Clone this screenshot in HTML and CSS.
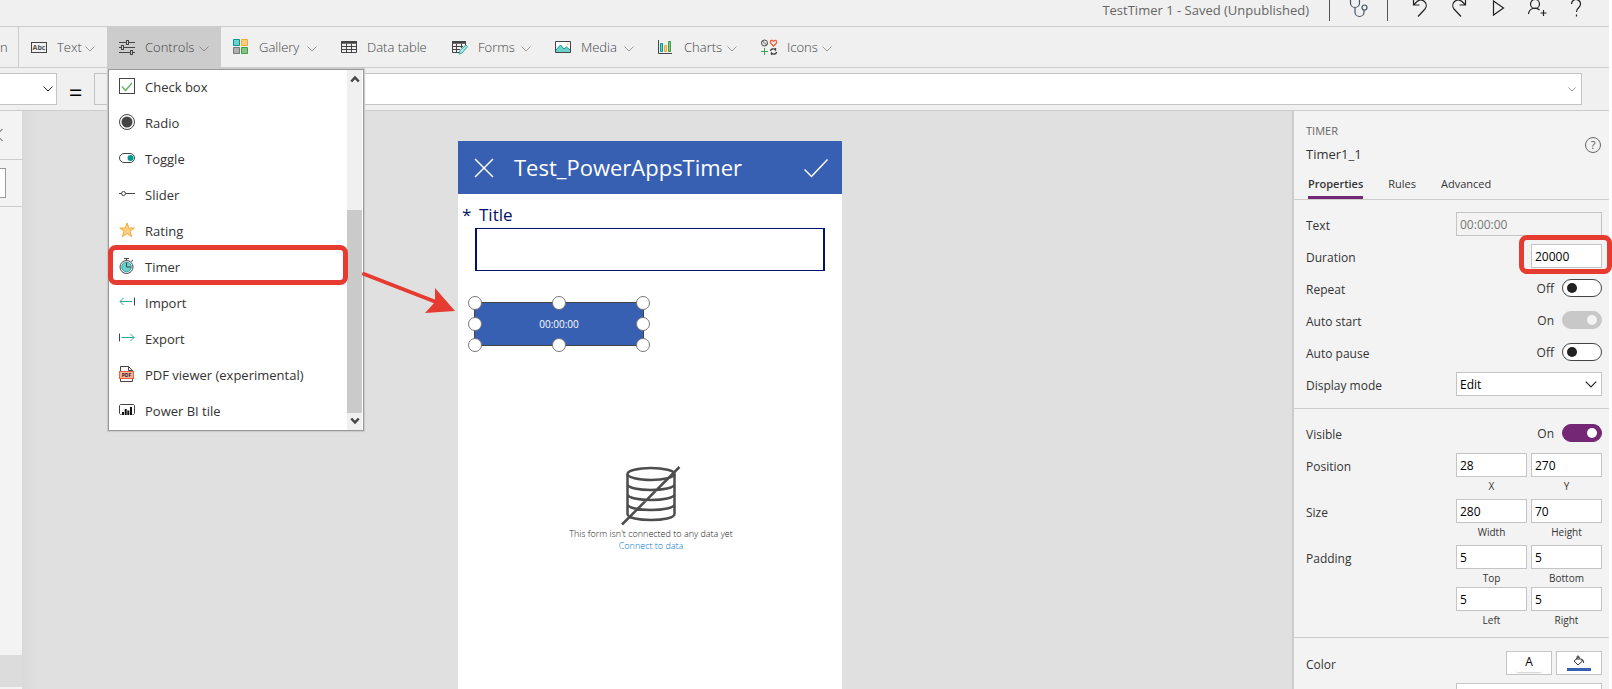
FILE: index.html
```html
<!DOCTYPE html>
<html lang="en">
<head>
<meta charset="utf-8">
<title>TestTimer 1 - Saved (Unpublished)</title>
<link rel="stylesheet" href="styles.css">
</head>
<body>
<svg class="defs" aria-hidden="true">
  <symbol id="chev" viewBox="0 0 10 6"><path d="M.5 .5 5 5 9.500 .5"/></symbol>
</svg>
<div class="app">
  <header class="titlebar">
    <span class="doc-name">TestTimer 1 - Saved (Unpublished)</span>
    <span class="bar"></span>
    <button class="tool check" aria-label="App checker"><svg width="20" height="20" viewBox="0 0 20 20"><path d="M3.500 1h-2v4a4.500 4.500 0 0 0 9 0V1h-2M6 9.500V14a4.500 4.500 0 0 0 9 0v-2"/><circle cx="15.500" cy="9.500" r="2.500"/></svg></button>
    <span class="bar"></span>
    <button class="tool" aria-label="Undo"><svg width="18" height="20" viewBox="0 0 18 20"><path d="M2.500 1v6h6M2.500 7 6 3.500a5.500 5.500 0 0 1 8 7.500L7 18.500"/></svg></button>
    <button class="tool" aria-label="Redo"><svg width="18" height="20" viewBox="0 0 18 20"><path d="M15.500 1v6h-6M15.500 7 12 3.500a5.500 5.500 0 0 0-8 7.500l7 7.500"/></svg></button>
    <button class="tool" aria-label="Preview"><svg width="18" height="20" viewBox="0 0 18 20"><path d="M4.500 3v14l10-7z"/></svg></button>
    <button class="tool" aria-label="Share"><svg width="20" height="20" viewBox="0 0 20 20"><circle cx="8" cy="6" r="4.500"/><path d="M1.500 16a6.500 6.500 0 0 1 11-4M16.500 12v6M13.500 15h6"/></svg></button>
    <button class="tool" aria-label="Help"><svg width="18" height="20" viewBox="0 0 18 20"><path d="M4.500 6a4.500 4.500 0 1 1 7.500 3.300C10 11 9.500 11.500 9.500 14M9.500 16.500v2"/></svg></button>
  </header>

  <nav class="ribbon">
    <button class="item cut">n</button>
    <button class="item"><svg class="ic" viewBox="0 0 16 16"><rect x=".5" y="3.500" width="15" height="10"/><text x="8" y="11" class="abc">Abc</text></svg><span>Text</span><svg class="chev"><use href="#chev"/></svg></button>
    <div class="menu-host">
      <button class="item open"><svg class="ic" viewBox="0 0 16 16"><path d="M0 3.500h7M10 3.500h6M0 8.500h2M5 8.500h11M0 13.500h11M14 13.500h2"/><rect x="7.500" y="1.500" width="2" height="4"/><rect x="2.500" y="6.500" width="2" height="4"/><rect x="11.500" y="11.500" width="2" height="4"/></svg><span>Controls</span><svg class="chev"><use href="#chev"/></svg></button>
      <div class="menu">
        <div class="menu-list">
          <button><svg class="ic" viewBox="0 0 16 16"><rect x=".5" y=".5" width="15" height="15"/><path d="m3 8.500 3.500 4L13 5" stroke="#6cb56c" stroke-width="1.500"/></svg>Check box</button>
          <button><svg class="ic" viewBox="0 0 16 16"><circle cx="8" cy="8" r="7.500"/><circle cx="8" cy="8" r="5.500" fill="#444" stroke="none"/></svg>Radio</button>
          <button><svg class="ic" viewBox="0 0 16 16"><rect x=".5" y="3.500" width="15" height="9" rx="4.500"/><circle cx="11.500" cy="8" r="3" fill="#009a93" stroke="none"/></svg>Toggle</button>
          <button><svg class="ic" viewBox="0 0 16 16"><path d="M0 7.500h2.500M6.500 7.500H16"/><circle cx="4.500" cy="7.500" r="2"/></svg>Slider</button>
          <button><svg class="ic" viewBox="0 0 16 16"><path d="m8 1 1.900 5h5.400l-4.200 3.300 1.500 5.400L8 11.500l-4.600 3.200 1.500-5.400L.7 6h5.400z" fill="#fdce82" stroke="#f2a93b"/></svg>Rating</button>
          <button><svg class="ic" viewBox="0 0 16 16"><circle cx="7.500" cy="9" r="6.500"/><circle cx="7.500" cy="9" r="4.800" fill="#6cd0cc" stroke="#2aa6a0"/><path d="M7.500 4.500V9H12M7.500 2.500V.5M5 .5h5M12 3.500l2-1.500"/></svg>Timer</button>
          <button><svg class="ic" viewBox="0 0 16 16"><path d="M13 7.500H1M4.500 4 1 7.500 4.500 11" stroke="#2aa6a0"/><path d="M15.500 3.500v8"/></svg>Import</button>
          <button><svg class="ic" viewBox="0 0 16 16"><path d="M2.500 7.500H15M11.500 4 15 7.500 11.500 11" stroke="#2aa6a0"/><path d="M.5 3.500v8"/></svg>Export</button>
          <button><svg class="ic" viewBox="0 0 16 16"><path d="M1.500 5V.5h8l4 4v11h-12V12M9.500 .5v4h4"/><rect x=".5" y="5.500" width="14" height="7" fill="#ffb09a" stroke="#e8603c"/><text x="7.500" y="11.300" class="pdf">PDF</text></svg>PDF viewer (experimental)</button>
          <button><svg class="ic" viewBox="0 0 16 16"><path d="M2.500 12.500h-1l-1-1v-8l1-1h13l1 1v8l-1 1h-1"/><path d="M4 13v-3M6.700 13V7M9.300 13V8.500M12 13V5" stroke="#111" stroke-width="2"/></svg>Power BI tile</button>
        </div>
        <div class="scroll"><svg viewBox="0 0 8 8"><path d="M1 6 4 2.800 7 6"/></svg><i></i><svg viewBox="0 0 8 8"><path d="M1 2 4 5.200 7 2"/></svg></div>
        <div class="mark mark-timer"></div>
        <svg class="arrow" width="96" height="46" viewBox="0 0 96 46"><path d="M2 5 74 33" stroke="#e63b30" stroke-width="4" stroke-linecap="round"/><path d="M73 19 93 42 63 44 73 33z" fill="#e63b30" stroke="none"/></svg>
      </div>
    </div>
    <button class="item"><svg class="ic" viewBox="0 0 16 16"><path d="M.5 .5h6v6h-6z" fill="#6cd0cc" stroke="#009a93"/><path d="M8.500 .5h6v6h-6z" fill="#fdce82" stroke="#f2a93b"/><path d="M.5 8.500h6v6h-6z" fill="#b0b0b0" stroke="#777"/><path d="M8.500 8.500h6v6h-6z" fill="#85c285" stroke="#3fa046"/></svg><span>Gallery</span><svg class="chev"><use href="#chev"/></svg></button>
    <button class="item"><svg class="ic" viewBox="0 0 16 16"><path d="M.5 2.500h15v11H.5zM5.500 5v9M10.500 5v9M1 7.500h14M1 10.500h14"/><path d="M0 3.500h16" stroke-width="2.500"/></svg><span>Data table</span></button>
    <button class="item"><svg class="ic" viewBox="0 0 16 16"><path d="M7 13.500H.5v-11h13V6M4.500 5v8M9.500 5v4M1 7.500h10M1 10.500h7"/><path d="M0 3.500h14" stroke-width="2.500"/><path d="m7 15 1-3.500L14 6l1.500 1.800L10 14z" fill="#b5e6e4" stroke="#2aa6a0"/></svg><span>Forms</span><svg class="chev"><use href="#chev"/></svg></button>
    <button class="item"><svg class="ic" viewBox="0 0 16 16"><path d="M.5 2.500h15v11H.5z" fill="#fff"/><path d="M1 11 5.500 6 9 10l2.500-2L15 11.500V13H1z" fill="#6cd0cc" stroke="none"/><path d="m1 11 4.500-5L9 10l2.500-2L15 11" stroke="#009a93"/><path d="M12 5h1.500" stroke="#f2a93b"/></svg><span>Media</span><svg class="chev"><use href="#chev"/></svg></button>
    <button class="item"><svg class="ic" viewBox="0 0 16 16"><path d="M.5 1v13.500H14"/><path d="M2.500 4.500h2v8h-2z" fill="#6cd0cc" stroke="#009a93"/><path d="M6.500 6.500h2v6h-2z" fill="#fdce82" stroke="#f2a93b"/><path d="M10.500 2.500h2v10h-2z" fill="#85c285" stroke="#3fa046"/></svg><span>Charts</span><svg class="chev"><use href="#chev"/></svg></button>
    <button class="item"><svg class="ic" viewBox="0 0 16 16"><circle cx="3.500" cy="4" r="3"/><path d="m1.500 2 4 4"/><path d="M12.500 7 9.500 4V2l1.500-.8L12.500 2.500 14 1.200l1.500.8v2z" stroke="#f0603c" stroke-width="1.300"/><path d="M3.500 9v7M0 12.500h7" stroke="#3fa046"/><path d="M9.500 12c0-2 3-3 5-1V9M15.500 13c0 2-3 3-5 1v2" stroke-width="1.300"/></svg><span>Icons</span><svg class="chev"><use href="#chev"/></svg></button>
  </nav>

  <div class="formula">
    <button class="prop" aria-label="Property"><svg class="chev dark"><use href="#chev"/></svg></button>
    <span class="eq">=</span>
    <div class="fbox"><span class="fx"></span><input aria-label="Formula"><svg class="chev small"><use href="#chev"/></svg></div>
  </div>

  <main class="work">
    <aside class="tree">
      <div class="tree-head"><svg width="8" height="14" viewBox="0 0 8 14"><path d="M7.500 1 1.500 7l6 6"/></svg></div>
      <div class="tree-search"><input aria-label="Search"></div>
      <div class="tree-sel"></div>
    </aside>

    <section class="canvas">
      <div class="phone">
        <div class="phone-head">
          <button aria-label="Cancel"><svg width="20" height="20" viewBox="0 0 20 20"><path d="m1 1 18 18M19 1 1 19"/></svg></button>
          <h1>Test_PowerAppsTimer</h1>
          <button aria-label="Submit"><svg width="24" height="20" viewBox="0 0 24 20"><path d="m.5 11.500 7 7L23.500 1.500"/></svg></button>
        </div>
        <div class="field">
          <label for="title"><span class="star">*</span>Title</label>
          <input id="title">
        </div>
        <div class="timer">00:00:00<i class="h tl"></i><i class="h tc"></i><i class="h tr"></i><i class="h ml"></i><i class="h mr"></i><i class="h bl"></i><i class="h bc"></i><i class="h br"></i></div>
        <div class="empty">
          <svg width="60" height="60" viewBox="0 0 60 60"><ellipse cx="30" cy="8" rx="23.500" ry="6"/><path d="M6.500 8v40c0 8 47 8 47 0V8M6.500 18c0 8 47 8 47 0M6.500 28c0 8 47 8 47 0M6.500 38c0 8 47 8 47 0M1 58.500 58.500 1"/></svg>
          <span>This form isn't connected to any data yet</span>
          <a href="#">Connect to data</a>
        </div>
      </div>
    </section>

    <aside class="panel">
      <div class="panel-head">
        <div><div class="kind">TIMER</div><div class="name">Timer1_1</div></div>
        <button class="help" aria-label="Help">?</button>
      </div>
      <div class="tabs"><button class="active">Properties</button><button>Rules</button><button>Advanced</button></div>
      <div class="group">
        <div class="row"><label for="text">Text</label><input id="text" class="box wide" value="00:00:00" disabled></div>
        <div class="row"><label for="dur">Duration</label><span class="marked"><input id="dur" class="box" value="20000"><span class="mark mark-dur"></span></span></div>
        <div class="row"><label for="rep">Repeat</label><span class="state">Off</span><input id="rep" type="checkbox" class="tog"></div>
        <div class="row"><label for="as">Auto start</label><span class="state">On</span><input id="as" type="checkbox" class="tog" checked disabled></div>
        <div class="row"><label for="ap">Auto pause</label><span class="state">Off</span><input id="ap" type="checkbox" class="tog"></div>
        <div class="row"><label for="dm">Display mode</label><span class="sel"><select id="dm" class="box wide"><option>Edit</option></select><svg class="chev dark"><use href="#chev"/></svg></span></div>
      </div>
      <div class="group second">
        <div class="row"><label for="vis">Visible</label><span class="state">On</span><input id="vis" type="checkbox" class="tog" checked></div>
        <div class="row pair"><span class="lab">Position</span><label><input class="box" value="28">X</label><label><input class="box" value="270">Y</label></div>
        <div class="row pair"><span class="lab">Size</span><label><input class="box" value="280">Width</label><label><input class="box" value="70">Height</label></div>
        <div class="row pair tight"><span class="lab">Padding</span><label><input class="box" value="5">Top</label><label><input class="box" value="5">Bottom</label></div>
        <div class="row pair"><span class="lab"></span><label><input class="box" value="5">Left</label><label><input class="box" value="5">Right</label></div>
      </div>
      <div class="group third">
        <div class="row"><span class="lab">Color</span><button class="swatch">A<i></i></button><button class="swatch fill" aria-label="Fill"><svg width="12" height="11" viewBox="0 0 12 11"><path d="M5.500 2 9.500 6 5 10 1 6zM4 5V1.500Q5 .2 6 1.500V5M8 4q2.500 0 2.800 4"/></svg><i></i></button></div>
        <div class="row"><span class="lab"></span><button class="box wide" aria-label="Border"></button></div>
      </div>
    </aside>
  </main>
</div>
</body>
</html>
```
FILE: styles.css
```css
* { box-sizing: border-box; }
body { margin: 0; background: #fff; font-family: "Open Sans", "Noto Sans", sans-serif; font-size: 13px; color: #333; }
button, input, select { font: inherit; color: inherit; margin: 0; border: 0; border-radius: 0; padding: 0; background: none; }
svg { fill: none; stroke: #444; flex: none; display: block; }
.defs { position: absolute; width: 0; height: 0; }
.app { height: 100vh; margin-right: 3px; display: flex; flex-direction: column; overflow-x: visible; overflow-y: clip; background: #f0f0f0; }
.chev { width: 10px; height: 6px; stroke: #999; }
.chev.dark { stroke: #222; }

.titlebar { height: 27px; flex: none; display: flex; justify-content: flex-end; align-items: flex-start; border-bottom: 1px solid #ccc; padding-right: 23px; }
.doc-name { line-height: 20px; margin-right: 20px; color: #666; }
.bar { width: 1px; height: 21px; background: #555; }
.tool { width: 20px; height: 20px; margin-right: 19px; margin-top: -2px; }
.tool svg { margin: auto; stroke: #222; stroke-width: 1.200; }
.tool.check { margin: -2px 18px 0 19px; }
.tool.check svg { stroke: #41546b; }
.bar + .tool:not(.check) { margin-left: 22px; }
.tool:last-child { margin-right: 0; }

.ribbon { height: 41px; flex: none; display: grid; grid-template-columns: 19px 88px 114px 108px 111px 103px 103px 103px 95px; border-bottom: 1px solid #ccc; color: #444; font-weight: 300; }
.item { display: flex; align-items: center; padding: 0 12px; white-space: nowrap; height: 40px; width: 100%; }
.item .ic { margin-right: 10px; }
.item .chev { margin: 4px 0 0 auto; }
.item.cut { padding: 0; border-right: 1px solid #ccc; }
.item.open { background: #ccc; }
.item.open .chev { stroke: #888; }
.ic { width: 16px; height: 16px; }
.abc { font: 700 7px "Open Sans", sans-serif; text-anchor: middle; fill: #555; stroke: none; }
.pdf { font: 700 5px "Open Sans", sans-serif; text-anchor: middle; fill: #222; stroke: none; }

.menu-host { position: relative; }
.menu { position: absolute; z-index: 5; left: 1px; top: 42px; width: 256px; display: flex; background: #fff; border: 1px solid #999; box-shadow: 0 0 1px 1px #ccc; color: #333; font-weight: 400; }
.menu-list { flex: 1; display: flex; flex-direction: column; }
.menu-list button { height: 36px; display: flex; align-items: center; gap: 10px; padding: 0 10px 2px; text-align: left; white-space: nowrap; }
.menu-list .ic { margin-bottom: 3px; }
.scroll { width: 15px; margin-right: 1px; background: #f0f0f0; display: flex; flex-direction: column; align-items: center; padding: 4px 0; }
.scroll svg { width: 10px; height: 10px; stroke: #444; stroke-width: 2; }
.scroll i { width: 100%; height: 203px; margin: auto 0 3px; background: #cacaca; }
.mark { position: absolute; border: 5px solid #e63b30; border-radius: 8px; }
.mark-timer { left: -1px; top: 175px; width: 240px; height: 40px; }
.arrow { position: absolute; left: 253px; top: 199px; }

.formula { height: 43px; flex: none; display: flex; align-items: center; padding-right: 27px; border-bottom: 1px solid #ccc; }
.prop { width: 57px; height: 32px; background: #fff; border: 1px solid #c4c4c4; border-left: 0; display: flex; justify-content: flex-end; align-items: center; padding-right: 3px; }
.eq { width: 37px; padding-top: 5px; text-align: center; font-size: 24px; line-height: 32px; color: #000; }
.fbox { flex: 1; height: 32px; display: flex; align-items: center; border: 1px solid #c4c4c4; background: #fff; padding-right: 5px; }
.fx { width: 25px; align-self: stretch; background: #f0f0f0; }
.fbox input { flex: 1; align-self: stretch; }
.chev.small { width: 8px; height: 5px; stroke: #777; }

.work { flex: 1; min-height: 0; display: grid; grid-template-columns: 22px 1fr 317px; grid-template-rows: minmax(0, 1fr); }
.tree { background: #f3f3f3; display: flex; flex-direction: column; overflow: hidden; }
.tree-head { height: 49px; flex: none; border-bottom: 1px solid #ccc; display: flex; align-items: center; }
.tree-head svg { margin-left: -5px; }
.tree-search { height: 47px; flex: none; border-bottom: 1px solid #ccc; padding-top: 8px; }
.tree-search input { width: 6px; height: 30px; display: block; background: #fff; border: 1px solid #999; border-left: 0; }
.tree-sel { height: 32px; margin: auto 0 2px; background: #dcdcdc; }
.canvas { background: linear-gradient(90deg, #d9d9d9, #e0e0e0 16px); display: flex; justify-content: center; padding: 30px 14px 0 0; min-height: 0; }
.phone { width: 384px; background: #fff; }
.phone-head { height: 53px; background: #3860b2; color: #fff; display: flex; align-items: center; padding: 0 14px 0 16px; }
.phone-head svg { stroke: #fff; stroke-width: 1.500; }
h1 { flex: 1; margin: 0 0 2px 20px; font-size: 22px; font-weight: 400; line-height: 30px; }
.field { padding: 8px 17px 0; color: #00126b; }
.field label { display: block; font-size: 17px; line-height: 26px; margin-left: -13px; }
.star { display: inline-block; width: 17px; }
.field input { display: block; width: 100%; height: 43px; border: 1px solid #00126b; border-width: 1px 2px; }
.timer { position: relative; width: 170px; height: 44px; margin: 31px 0 0 16px; border: 1px solid #444; background: #3860b2; color: #fff; font-size: 10px; line-height: 42px; text-align: center; }
.h { position: absolute; width: 14px; height: 14px; margin: -7px; border: 1px solid #777; border-radius: 50%; background: #fff; }
.tl, .ml, .bl { left: 0; }
.tc, .bc { left: 50%; }
.tr, .mr, .br { left: 100%; }
.tl, .tc, .tr { top: 0; }
.ml, .mr { top: 50%; }
.bl, .bc, .br { top: 100%; }
.empty { margin-top: 120px; padding-left: 2px; display: flex; flex-direction: column; align-items: center; font-size: 9px; font-weight: 300; line-height: 12px; color: #222; }
.empty svg { stroke: #4d4d4d; stroke-width: 2.500; margin-bottom: 2px; }
.empty a { color: #0078d4; text-decoration: none; }

.panel { background: #f3f3f3; border-left: 2px solid #ccc; font-size: 12px; }
.panel-head { display: flex; justify-content: space-between; padding: 12px 8px 0 12px; height: 60px; }
.kind { font-size: 11px; line-height: 16px; color: #666; }
.name { font-size: 13px; line-height: 16px; margin-top: 7px; }
.help { width: 16px; height: 16px; margin-top: 14px; border: 1px solid #666; border-radius: 50%; line-height: 14px; font-size: 11px; color: #555; }
.tabs { display: flex; gap: 25px; height: 29px; padding-left: 14px; border-bottom: 1px solid #ccc; font-size: 11px; }
.tabs button { padding-bottom: 3px; }
.tabs .active { font-weight: 600; border-bottom: 3px solid #742774; padding-bottom: 0; }
.group { padding: 12px 7px 12px 12px; display: flex; flex-direction: column; gap: 8px; border-bottom: 1px solid #ccc; }
.row { display: flex; align-items: center; height: 24px; gap: 4px; }
.row > label:first-child, .lab { flex: 1; padding-top: 2px; }
.box { width: 71px; height: 24px; border: 1px solid #c4c4c4; background: #fff; color: #000; padding: 0 3px; display: block; }
.box.wide { width: 146px; }
.box:disabled { background: #f3f3f3; color: #777; }
.state { margin-right: 4px; }
.tog { appearance: none; width: 40px; height: 18px; border-radius: 9px; border: 1px solid #444; background: #fff; display: flex; align-items: center; padding: 0 4px; }
.tog::before { content: ""; width: 10px; height: 10px; border-radius: 50%; background: #222; }
.tog:checked { background: #742774; border-color: #742774; justify-content: flex-end; }
.tog:checked::before { background: #fff; }
.tog:disabled { background: #c8c8c8; border-color: #c8c8c8; }
.tog:disabled::before { background: #f3f3f3; }
.marked, .sel { position: relative; }
.mark-dur { top: -9px; left: -12px; width: 93px; height: 39px; z-index: 3; }
.sel select { appearance: none; }
.sel .chev { position: absolute; right: 5px; top: 9px; width: 12px; height: 7px; }
.second { gap: 6px; padding-bottom: 10px; }
.second .row:first-child { margin-bottom: 2px; }
.pair { height: 40px; align-items: flex-start; }
.pair .lab { padding-top: 5px; }
.pair.tight { height: 36px; }
.pair label { width: 71px; text-align: center; font-size: 10px; line-height: 16px; }
.pair .box { font-size: 12px; margin-bottom: 1px; }
.third { border: 0; padding-top: 13px; }
.swatch { width: 46px; height: 24px; border: 1px solid #c4c4c4; background: #fff; display: flex; flex-direction: column; align-items: center; justify-content: center; line-height: 14px; color: #000; }
.swatch i { width: 24px; height: 3px; background: #fff; box-shadow: 0 1px 2px #ccc; }
.swatch.fill i { background: #3860b2; box-shadow: none; margin-top: 2px; }
.swatch svg { stroke: #333; }
```
